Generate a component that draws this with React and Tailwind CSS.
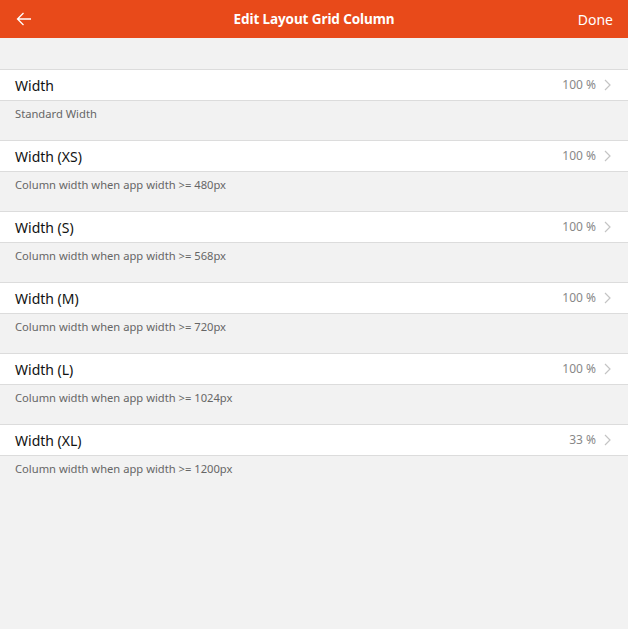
import React from "react";

const rows = [
  { label: "Width", value: "100 %", desc: "Standard Width" },
  { label: "Width (XS)", value: "100 %", desc: "Column width when app width >= 480px" },
  { label: "Width (S)", value: "100 %", desc: "Column width when app width >= 568px" },
  { label: "Width (M)", value: "100 %", desc: "Column width when app width >= 720px" },
  { label: "Width (L)", value: "100 %", desc: "Column width when app width >= 1024px" },
  { label: "Width (XL)", value: "33 %", desc: "Column width when app width >= 1200px" },
];

export default function App() {
  return (
    <div className="w-[628px] h-[629px] bg-[#f2f2f2] flex flex-col" style={{ fontFamily: '"Noto Sans", "Open Sans", sans-serif' }}>
      <div className="h-[38px] bg-[#e84a1a] grid grid-cols-[1fr_auto_1fr] items-center px-[15px] text-white shrink-0">
        <svg width="16" height="14" viewBox="0 0 16 14" fill="none" stroke="white" strokeWidth="1.3" className="ml-[1px]">
          <path d="M15 7H1.5M7.5 1L1.5 7l6 6" />
        </svg>
        <div className="text-[13.5px] font-bold tracking-[-0.1px]">Edit Layout Grid Column</div>
        <div className="text-[14px] justify-self-end">Done</div>
      </div>
      <div className="h-[31px] shrink-0" />
      {rows.map((r) => (
        <div key={r.label} className="flex flex-col">
          <div className="h-[32px] bg-white border-y border-[#dcdcdc] flex items-center justify-between pl-[15px] pr-[17px]">
            <span className="text-[14px] text-[#111]">{r.label}</span>
            <span className="flex items-center gap-[8px] text-[12px] text-[#888]">
              {r.value}
              <svg width="7" height="12" viewBox="0 0 7 12" fill="none" stroke="#c4c4c4" strokeWidth="1.2">
                <path d="M1 1l5 5-5 5" />
              </svg>
            </span>
          </div>
          <div className="h-[39px] pl-[15px] pt-[5px] text-[11.2px] text-[#666]">{r.desc}</div>
        </div>
      ))}
    </div>
  );
}
